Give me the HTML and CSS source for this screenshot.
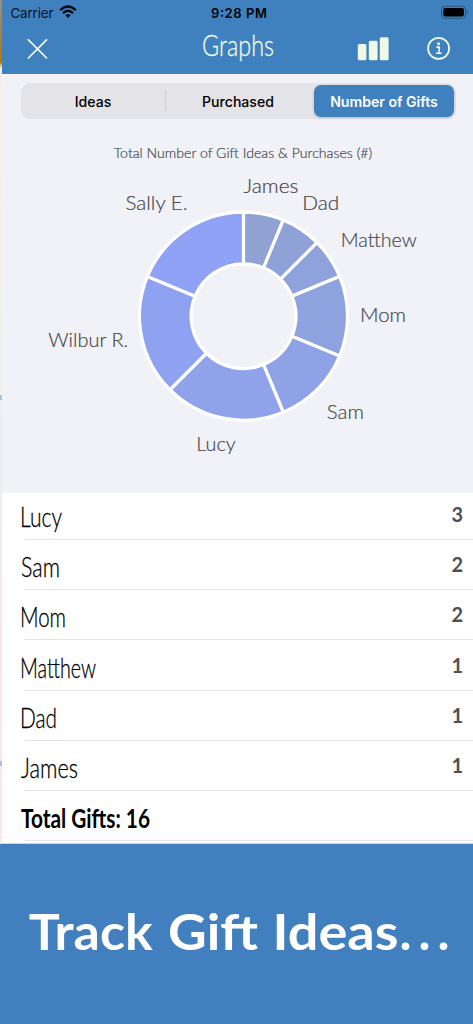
FILE: index.html
```html
<!DOCTYPE html>
<html lang="en">
<head>
<meta charset="utf-8">
<title>Graphs</title>
<link rel="stylesheet" href="styles.css">
</head>
<body>
<main class="screen">
  <header class="header">
    <div class="status">
      <svg class="carrier" viewBox="2 0 90 25" width="90" height="25">
        <text x="10.5" y="17.5" textLength="43">Carrier</text>
        <g fill="none" stroke="#050a10" stroke-width="2.4">
          <path d="M60.2 10.2Q68 3 75.8 10.2"/>
          <path d="M63 13.1Q68 8.5 73 13.1"/>
        </g>
        <path d="M65.4 15.3Q68 13.2 70.6 15.3L68 18Z" fill="#050a10"/>
      </svg>
      <svg class="clock" viewBox="205 0 70 25" width="70" height="25">
        <text x="211" y="17.5" textLength="56">9:28 PM</text>
      </svg>
      <svg viewBox="383 0 90 25" width="90" height="25">
        <rect x="441.6" y="6.3" width="24" height="12" rx="3.3" fill="none" stroke="#28547f" stroke-width="1"/>
        <rect x="443.3" y="8" width="20.6" height="8.6" rx="1.8" fill="#000"/>
        <path d="M467 10.2Q469 12.3 467 14.4Z" fill="#28547f"/>
      </svg>
    </div>
    <div class="nav">
      <svg viewBox="2 25 110 49" width="110" height="49">
        <path d="M28.4 39.8L46.6 58M46.6 39.8L28.4 58" stroke="#f3faea" stroke-width="1.7" stroke-linecap="round"/>
      </svg>
      <svg class="hand title" viewBox="198 25 82 49" width="82" height="49">
        <text x="203" y="55.5" textLength="72" lengthAdjust="spacingAndGlyphs">Graphs</text>
      </svg>
      <svg viewBox="350 25 123 49" width="123" height="49">
        <g fill="#f0f8e8">
          <rect x="357.8" y="44" width="8.6" height="16.3" rx="1.5"/>
          <rect x="368.8" y="40.7" width="8.8" height="19.6" rx="1.5"/>
          <rect x="379.8" y="37.2" width="8.8" height="23.1" rx="1.5"/>
          <circle cx="438.6" cy="43.7" r="1.5"/>
        </g>
        <g fill="none" stroke="#f0f8e8" stroke-width="1.8">
          <circle cx="438.6" cy="48.4" r="10.5"/>
          <path d="M436.3 47.1H439.1V53.2M435.9 53.3H441.8" stroke-width="1.6"/>
        </g>
      </svg>
    </div>
  </header>

  <div class="segments">
    <span class="segment">Ideas</span>
    <span class="segment divided">Purchased</span>
    <span class="segment active">Number of Gifts</span>
  </div>

  <svg class="chart" viewBox="2 119 471 373.5" width="471" height="373.5">
    <text class="chart-title" x="113.7" y="158" textLength="258.5" lengthAdjust="spacingAndGlyphs">Total Number of Gift Ideas &amp; Purchases (#)</text>
    <g transform="translate(243.5 316.2)" stroke="#fff" stroke-width="3.2">
      <path fill="#8fa2d3" d="M0-104A104 104 0 0 1 39.8-96.1L20.05-48.4A52.4 52.4 0 0 0 0-52.4Z"/>
      <path fill="#8fa2d7" d="M39.8-96.1A104 104 0 0 1 73.5-73.5L37.05-37.05A52.4 52.4 0 0 0 20.05-48.4Z"/>
      <path fill="#8fa2dc" d="M73.5-73.5A104 104 0 0 1 96.1-39.8L48.4-20.05A52.4 52.4 0 0 0 37.05-37.05Z"/>
      <path fill="#8fa2e0" d="M96.1-39.8A104 104 0 0 1 96.1 39.8L48.4 20.05A52.4 52.4 0 0 0 48.4-20.05Z"/>
      <path fill="#8fa2e6" d="M96.1 39.8A104 104 0 0 1 39.8 96.1L20.05 48.4A52.4 52.4 0 0 0 48.4 20.05Z"/>
      <path fill="#8fa2ea" d="M39.8 96.1A104 104 0 0 1-73.5 73.5L-37.05 37.05A52.4 52.4 0 0 0 20.05 48.4Z"/>
      <path fill="#8fa2f1" d="M-73.5 73.5A104 104 0 0 1-96.1-39.8L-48.4-20.05A52.4 52.4 0 0 0-37.05 37.05Z"/>
      <path fill="#8fa2f5" d="M-96.1-39.8A104 104 0 0 1 0-104L0-52.4A52.4 52.4 0 0 0-48.4-20.05Z"/>
    </g>
    <g class="labels">
      <text x="243.5" y="193.4" textLength="55" lengthAdjust="spacingAndGlyphs">James</text>
      <text x="302.2" y="210.3" textLength="37" lengthAdjust="spacingAndGlyphs">Dad</text>
      <text x="125.5" y="210.3" textLength="62" lengthAdjust="spacingAndGlyphs">Sally E.</text>
      <text x="340.8" y="247.4" textLength="76" lengthAdjust="spacingAndGlyphs">Matthew</text>
      <text x="360" y="321.9" textLength="46" lengthAdjust="spacingAndGlyphs">Mom</text>
      <text x="48.3" y="347.4" textLength="80" lengthAdjust="spacingAndGlyphs">Wilbur R.</text>
      <text x="326.8" y="419" textLength="37" lengthAdjust="spacingAndGlyphs">Sam</text>
      <text x="196.2" y="450.8" textLength="39.5" lengthAdjust="spacingAndGlyphs">Lucy</text>
    </g>
  </svg>

  <ul class="list">
    <li class="row first"><svg class="hand" width="140" height="50"><text x="-1" y="36.5" textLength="42" lengthAdjust="spacingAndGlyphs">Lucy</text></svg><span class="count">3</span></li>
    <li class="row"><svg class="hand" width="140" height="50"><text x="0" y="36.5" textLength="39" lengthAdjust="spacingAndGlyphs">Sam</text></svg><span class="count">2</span></li>
    <li class="row"><svg class="hand" width="140" height="50"><text x="-1" y="36.5" textLength="46" lengthAdjust="spacingAndGlyphs">Mom</text></svg><span class="count">2</span></li>
    <li class="row"><svg class="hand" width="140" height="50"><text x="-1" y="36.5" textLength="76" lengthAdjust="spacingAndGlyphs">Matthew</text></svg><span class="count">1</span></li>
    <li class="row"><svg class="hand" width="140" height="50"><text x="-1" y="36.5" textLength="37" lengthAdjust="spacingAndGlyphs">Dad</text></svg><span class="count">1</span></li>
    <li class="row"><svg class="hand" width="140" height="50"><text x="0" y="36.5" textLength="57" lengthAdjust="spacingAndGlyphs">James</text></svg><span class="count">1</span></li>
    <li class="row total"><svg class="hand" width="140" height="50"><text x="0" y="36.5" textLength="129" lengthAdjust="spacingAndGlyphs">Total Gifts: 16</text></svg></li>
  </ul>
</main>
<footer class="banner">
  <svg viewBox="0 844 473 180" width="473" height="180">
    <text x="28.7" y="949.7" textLength="124" lengthAdjust="spacingAndGlyphs">Track</text>
    <text x="168" y="949.7" textLength="90" lengthAdjust="spacingAndGlyphs">Gift</text>
    <text x="272.5" y="949.7" textLength="126" lengthAdjust="spacingAndGlyphs">Ideas</text>
    <text x="399.5" y="949.7" textLength="50">...</text>
  </svg>
</footer>
</body>
</html>
```
FILE: styles.css
```css
* { box-sizing: border-box; }
body {
  margin: 0;
  width: 473px;
  height: 1024px;
  overflow: hidden;
  font-family: Inter, sans-serif;
}
svg { display: block; flex: none; }
.screen {
  height: 844px;
  padding-left: 2px;
  background:
    linear-gradient(#9fc4e8, #9fc4e8) 0 395px / 2px 5px no-repeat,
    linear-gradient(#9fc4e8, #9fc4e8) 0 761px / 2px 5px no-repeat,
    linear-gradient(#a08d78 0, #a97d35 45px, #b47800 62px, #f8eee5 68px, #f8f0e8 130px, #eeeef1 490px, #eeeaec 560px, #fae6e8 620px, #fae8ea 844px);
}
.header { height: 74px; background: #3f80be; }
.status, .nav { display: flex; justify-content: space-between; }
.status { height: 25px; }
.carrier text { font-size: 13.3px; fill: #071321; }
.clock { margin-left: 4px; }
.clock text { font-size: 13px; font-weight: 600; fill: #000; }
.nav { height: 49px; }
.nav .title { margin-left: 13px; overflow: visible; }

.hand text { font-family: Lato, sans-serif; font-size: 27px; font-weight: 300; fill: #000; stroke: #000; stroke-width: .3px; }
.hand.title text { font-size: 30px; fill: #f3faea; stroke: #f3faea; }

.segments {
  display: grid;
  grid-template-columns: 144px 148px 143px;
  height: 45px;
  padding: 9px 17px 0 19px;
  background: #f1f2f7;
}
.segment {
  display: flex;
  align-items: center;
  justify-content: center;
  height: 36px;
  background: #e3e3e8;
  font-size: 14.1px;
  font-weight: 500;
  white-space: nowrap;
}
.segment:first-child { border-radius: 9px 0 0 9px; }
.divided {
  padding-right: 2px;
  background: linear-gradient(#ccccd1, #ccccd1) 0 8px / 1px 20px no-repeat, #e3e3e8;
}
.segment.active {
  border: 2px solid #e3e3e8;
  border-left-width: 1px;
  border-radius: 0 9px 9px 0;
  color: #fff;
  font-weight: 600;
  position: relative;
  z-index: 0;
}
.segment.active::before {
  content: "";
  position: absolute;
  inset: 0;
  z-index: -1;
  border-radius: 7px;
  background: #3f80be;
  box-shadow: 0 1px 3px rgba(0, 0, 0, .18);
}

.chart { background: #f1f2f7; font-family: Lato, sans-serif; font-weight: 300; fill: #48484c; }
.chart text { stroke: #48484c; stroke-width: .2px; }
.chart-title { font-size: 13.4px; }
.labels { font-size: 19.5px; }

.list {
  margin: 0;
  padding: 0;
  height: 351.5px;
  list-style: none;
  background: #fff;
  border-bottom: 1px solid #d2d6dc;
}
.row {
  display: flex;
  align-items: flex-end;
  justify-content: space-between;
  height: 50.2px;
  padding: 0 10px 0 19px;
  background: linear-gradient(#e4e4e6, #e4e4e6) 23px 100% / 100% 1px no-repeat;
}
.row.first { height: 47.5px; }
.row .hand { overflow: visible; }
.count {
  padding-bottom: 14px;
  font: bold 20px/24px Lato, sans-serif;
  color: #505052;
}
.row.total text { font-weight: 700; stroke: none; }

.banner { height: 180px; background: #417fbe; }
.banner text { font: bold 50.5px Lato, sans-serif; fill: #fff; }
```
